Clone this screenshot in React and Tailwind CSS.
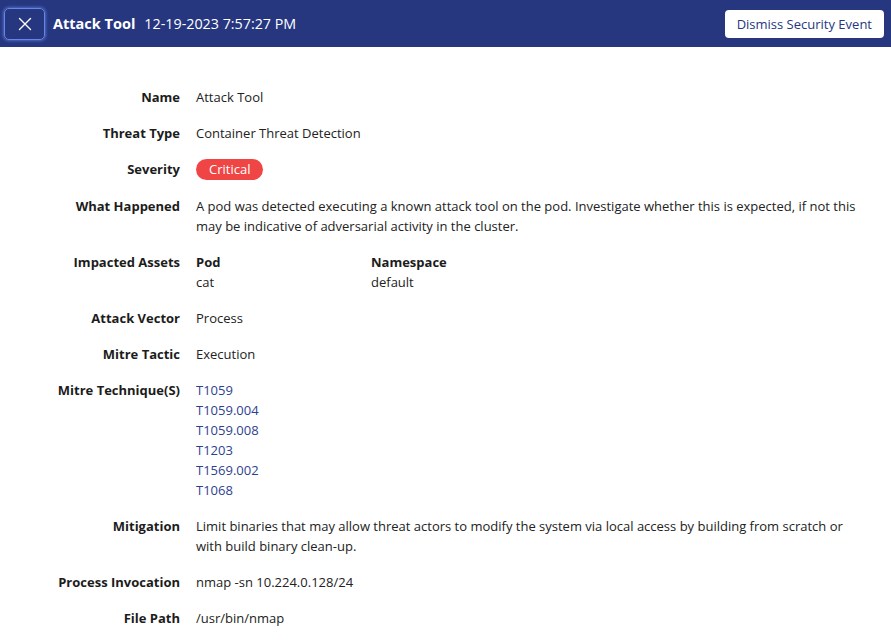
import React from 'react';

const techniques = ['T1059', 'T1059.004', 'T1059.008', 'T1203', 'T1569.002', 'T1068'];

function Row({ label, children }) {
  return (
    <div className="flex gap-4">
      <div className="w-[180px] shrink-0 text-right font-bold text-[#1c1c1c]">{label}</div>
      <div className="flex-1 text-[#222]">{children}</div>
    </div>
  );
}

export default function App() {
  return (
    <div className="min-h-[642px] bg-white text-[13px] leading-5" style={{ fontFamily: '"Open Sans", sans-serif' }}>
      <header className="h-[47px] bg-[#263780] flex items-center pl-1 pr-[7px]">
        <button className="w-[41px] h-[32px] rounded-[5px] border border-[#6486e6] shadow-[0_0_3px_1px_rgba(110,140,240,0.6)] flex items-center justify-center text-white">
          <svg width="14" height="14" viewBox="0 0 14 14" fill="none" stroke="currentColor" strokeWidth="1.4" strokeLinecap="round">
            <path d="M1.5 1.5l11 11M12.5 1.5l-11 11" />
          </svg>
        </button>
        <div className="ml-2 text-white text-[14.5px] font-bold">Attack Tool</div>
        <div className="ml-[9px] text-white text-[14.3px]">12-19-2023 7:57:27 PM</div>
        <button className="ml-auto h-[28px] px-3 rounded bg-white text-[#263780] text-[13px] font-medium">
          Dismiss Security Event
        </button>
      </header>

      <div className="pt-[40px] pr-[32px] flex flex-col gap-4">
        <Row label="Name">Attack Tool</Row>
        <Row label="Threat Type">Container Threat Detection</Row>
        <Row label="Severity">
          <span className="inline-block h-[21px] leading-[21px] px-[13px] rounded-full bg-[#f04545] text-white">Critical</span>
        </Row>
        <Row label="What Happened">
          A pod was detected executing a known attack tool on the pod. Investigate whether this is expected, if not this may be indicative of adversarial activity in the cluster.
        </Row>
        <Row label="Impacted Assets">
          <div className="flex">
            <div className="w-[175px]">
              <div className="font-bold text-[#1c1c1c]">Pod</div>
              <div>cat</div>
            </div>
            <div>
              <div className="font-bold text-[#1c1c1c]">Namespace</div>
              <div>default</div>
            </div>
          </div>
        </Row>
        <Row label="Attack Vector">Process</Row>
        <Row label="Mitre Tactic">Execution</Row>
        <Row label="Mitre Technique(S)">
          <div className="flex flex-col">
            {techniques.map((t) => (
              <a key={t} href="#" className="text-[#2e4191]">{t}</a>
            ))}
          </div>
        </Row>
        <Row label="Mitigation">
          Limit binaries that may allow threat actors to modify the system via local access by building from scratch or with build binary clean-up.
        </Row>
        <Row label="Process Invocation">nmap -sn 10.224.0.128/24</Row>
        <Row label="File Path">/usr/bin/nmap</Row>
      </div>
    </div>
  );
}
